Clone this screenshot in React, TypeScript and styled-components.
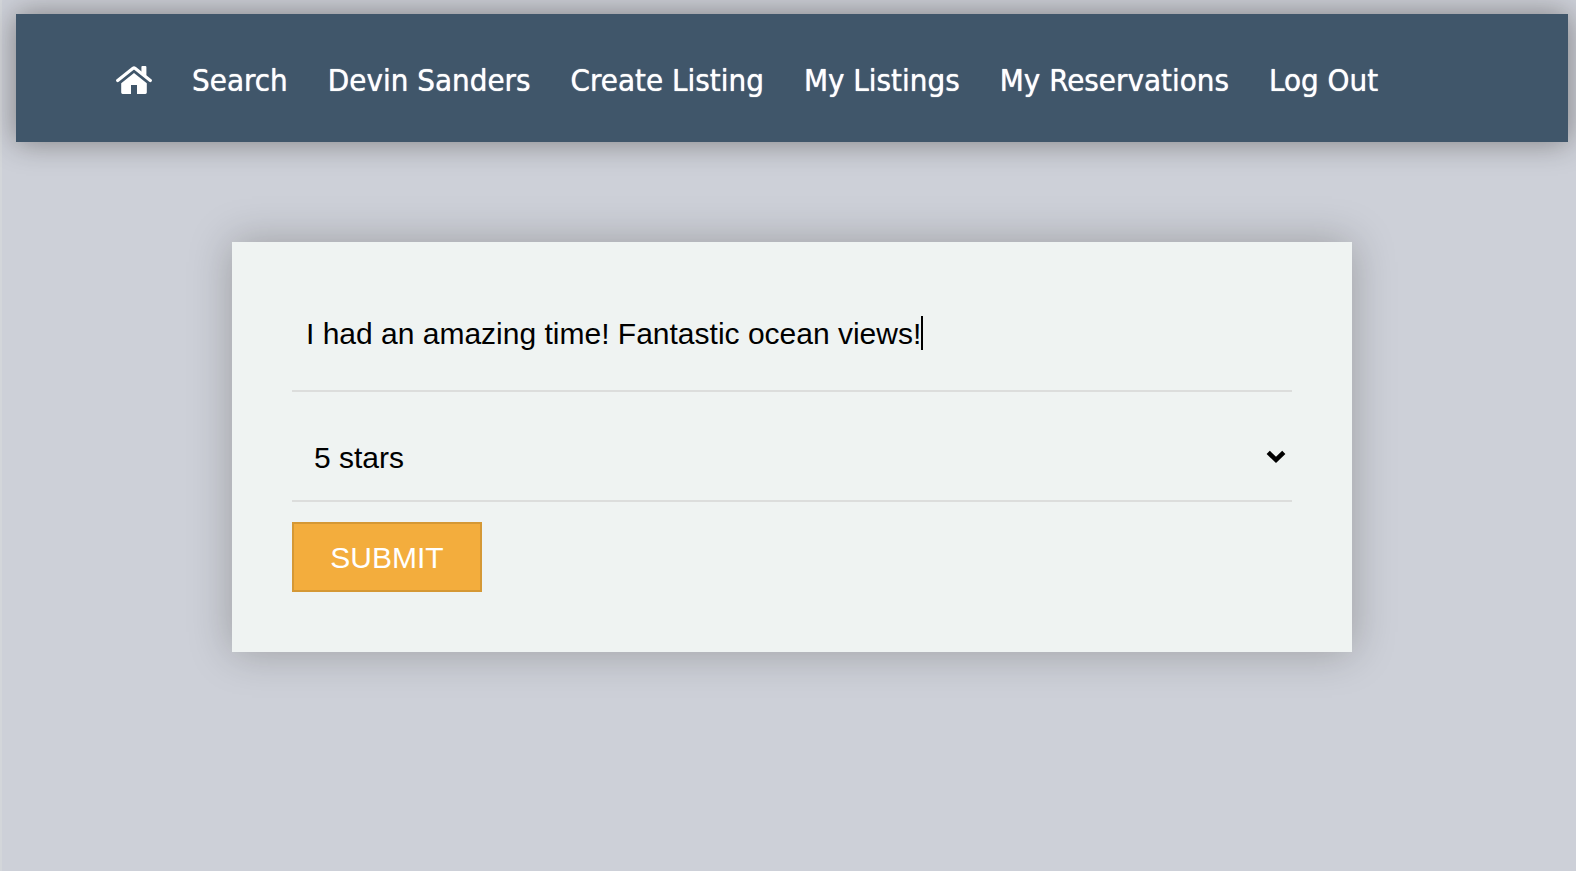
import React, { useState } from "react";
import styled, { createGlobalStyle } from "styled-components";

const GlobalStyle = createGlobalStyle`
  *, *::before, *::after { box-sizing: border-box; }
  html { min-height: 100%; background: #cdd0d8; }
  body {
    margin: 0;
    font-family: "Liberation Sans", Arial, sans-serif;
    color: #000;
  }
`;

const Page = styled.div`
  min-height: 100vh;
  padding: 14px 8px 60px 14px;
  border-left: 2px solid #d3d6da;
`;

const NavBar = styled.nav`
  display: flex;
  align-items: center;
  gap: 40px;
  min-height: 128px;
  padding: 4px 100px 0;
  background: #40566a;
  box-shadow: 0 0 28px rgba(20, 12, 6, 0.42);
`;

const NavLink = styled.a`
  display: inline-flex;
  align-items: center;
  color: #fff;
  font-family: Tahoma, "DejaVu Sans Condensed", sans-serif;
  font-size: 31px;
  line-height: 40px;
  white-space: nowrap;
  text-decoration: none;
  text-shadow: 0 0 1px #fff;
`;

const HomeIcon = styled.svg`
  width: 36px;
  height: 28px;
`;

const Card = styled.form`
  max-width: 1120px;
  margin: 100px auto 0;
  padding: 60px;
  background: #eff3f2;
  box-shadow: 0 0 40px rgba(20, 16, 6, 0.26);
`;

const ReviewField = styled.div`
  display: flex;
  align-items: center;
  padding: 14px 14px 40px;
  border-bottom: 2px solid #dcdddc;
`;

const ReviewInput = styled.input`
  field-sizing: content;
  min-width: 2px;
  max-width: 100%;
  height: 34px;
  padding: 2px 0 0;
  border: 0;
  outline: 0;
  background: transparent;
  color: #000;
  caret-color: transparent;
  font: 30px/32px "Liberation Sans", Arial, sans-serif;
`;

const Caret = styled.span`
  width: 2px;
  height: 34px;
  background: #000;
`;

const RatingField = styled.div`
  position: relative;
  margin: 20px 0;
  border-bottom: 2px solid #dcdddc;
`;

const RatingSelect = styled.select`
  appearance: none;
  display: block;
  width: 100%;
  height: 88px;
  padding: 4px 40px 0 22px;
  border: 0;
  outline: 0;
  border-radius: 0;
  background: transparent;
  color: #000;
  font: 30px/34px "Liberation Sans", Arial, sans-serif;
`;

const Chevron = styled.svg`
  position: absolute;
  top: 38px;
  right: 6px;
  width: 20px;
  height: 14px;
  pointer-events: none;
`;

const SubmitButton = styled.button`
  display: block;
  min-width: 190px;
  height: 70px;
  padding: 2px 36px 0;
  border: 2px solid #d59835;
  border-radius: 0;
  background: #f3ad3d;
  color: #fff;
  font: 30px/34px "Liberation Sans", Arial, sans-serif;
  text-transform: uppercase;
`;

const links = ["Search", "Devin Sanders", "Create Listing", "My Listings", "My Reservations", "Log Out"];
const ratings = [5, 4, 3, 2, 1];

export default function App() {
  const [review, setReview] = useState("I had an amazing time! Fantastic ocean views!");
  const [rating, setRating] = useState("5");

  return (
    <Page>
      <GlobalStyle />
      <NavBar>
        <NavLink href="#home" aria-label="Home">
          <HomeIcon viewBox="0 0 36 28" aria-hidden="true">
            <path d="M25.4 8V1q0-1 1-1h3q1 0 1 1v11z" fill="#fff" />
            <path d="M1.7 14.6 17 2.3q1-.7 2 0l15.3 12.3" fill="none" stroke="#fff" strokeWidth="3.2" strokeLinecap="round" />
            <path d="M18 7 30.8 17.2V26.6q0 1.4-1.4 1.4H21V19h-6v9H6.6q-1.4 0-1.4-1.4V17.2z" fill="#fff" />
          </HomeIcon>
        </NavLink>
        {links.map((label) => (
          <NavLink key={label} href={"#" + label.toLowerCase().replace(/ /g, "-")}>
            {label}
          </NavLink>
        ))}
      </NavBar>
      <main>
        <Card onSubmit={(e) => e.preventDefault()}>
          <ReviewField>
            <ReviewInput
              aria-label="Review"
              value={review}
              onChange={(e) => setReview(e.target.value)}
            />
            <Caret />
          </ReviewField>
          <RatingField>
            <RatingSelect aria-label="Rating" value={rating} onChange={(e) => setRating(e.target.value)}>
              {ratings.map((n) => (
                <option key={n} value={n}>
                  {n} {n === 1 ? "star" : "stars"}
                </option>
              ))}
            </RatingSelect>
            <Chevron viewBox="0 0 20 14" aria-hidden="true">
              <path d="M2.2 2.4 10 9.8 17.8 2.4" fill="none" stroke="#000" strokeWidth="4.6" />
            </Chevron>
          </RatingField>
          <SubmitButton type="submit">Submit</SubmitButton>
        </Card>
      </main>
    </Page>
  );
}
